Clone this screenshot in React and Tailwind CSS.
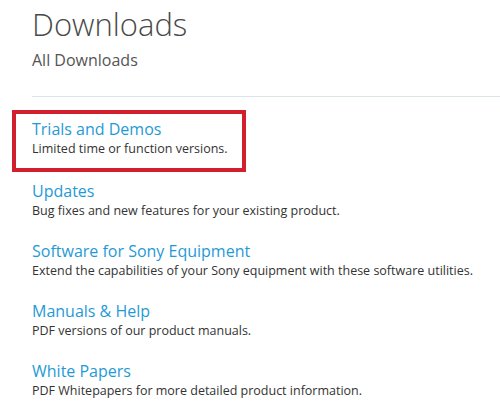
import React from 'react';

const items = [
  { title: 'Updates', desc: 'Bug fixes and new features for your existing product.' },
  { title: 'Software for Sony Equipment', desc: 'Extend the capabilities of your Sony equipment with these software utilities.' },
  { title: 'Manuals & Help', desc: 'PDF versions of our product manuals.' },
  { title: 'White Papers', desc: 'PDF Whitepapers for more detailed product information.' },
];

function Item({ title, desc }) {
  return (
    <div>
      <a href="#" className="block text-[16px] leading-[22px] text-[#1f9ad6] whitespace-nowrap">{title}</a>
      <p className="text-[12.5px] leading-[18px] text-[#333] whitespace-nowrap">{desc}</p>
    </div>
  );
}

export default function App() {
  return (
    <div className="w-[500px] h-[419px] bg-white overflow-hidden" style={{ fontFamily: '"Open Sans", "Noto Sans", sans-serif' }}>
      <div className="pl-8 pt-[6px]">
        <h1 className="text-[31px] leading-[36px] font-light text-[#4a4a4a]">Downloads</h1>
        <p className="mt-[6px] text-[16px] leading-[24px] text-[#555]">All Downloads</p>
        <div className="mt-6 h-px bg-[#dde4e7]" />
      </div>
      <div className="mt-[13px]">
        <div className="ml-3 w-[234px] border-4 border-[#d21f2d] pl-4 pt-[4px] pb-[10px]">
          <Item title="Trials and Demos" desc="Limited time or function versions." />
        </div>
        <div className="pl-8 mt-[2px]">
          {items.map((it) => (
            <div key={it.title} className="pt-[6px] pb-[14px]">
              <Item title={it.title} desc={it.desc} />
            </div>
          ))}
        </div>
      </div>
    </div>
  );
}
